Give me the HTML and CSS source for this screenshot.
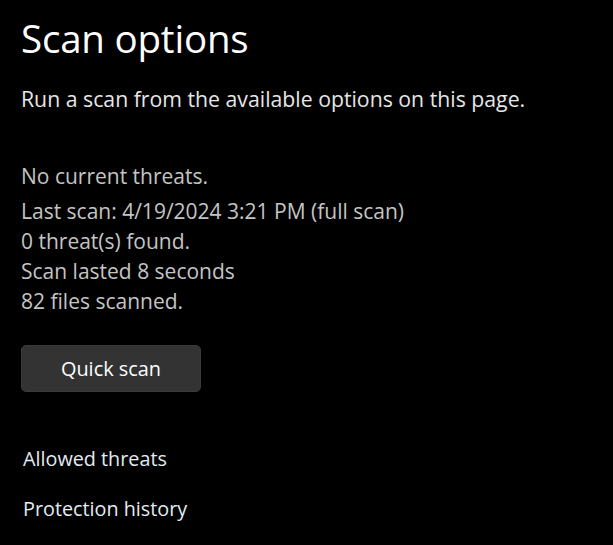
FILE: index.html
```html
<!DOCTYPE html>
<html lang="en">
<head>
<meta charset="utf-8">
<link rel="stylesheet" href="styles.css">
</head>
<body>
<main class="page">
  <h1 class="title">Scan options</h1>
  <p class="subtitle">Run a scan from the available options on this page.</p>
  <p class="status">No current threats.</p>
  <div class="details">
    <div>Last scan: 4/19/2024 3:21 PM (full scan)</div>
    <div>0 threat(s) found.</div>
    <div>Scan lasted 8 seconds</div>
    <div>82 files scanned.</div>
  </div>
  <button class="btn">Quick scan</button>
  <nav class="links">
    <a class="link">Allowed threats</a>
    <a class="link">Protection history</a>
  </nav>
</main>
</body>
</html>
```

FILE: styles.css
```css
html, body {
  margin: 0;
  padding: 0;
  background: #000;
}
.page {
  font-family: "Open Sans", "Noto Sans", sans-serif;
  padding: 12px 0 0 21px;
  display: flex;
  flex-direction: column;
  align-items: flex-start;
}
.title {
  margin: 0;
  font-weight: 400;
  font-size: 38.5px;
  line-height: 52px;
  color: #ffffff;
  letter-spacing: -0.2px;
}
.subtitle {
  margin: 21px 0 0 0;
  font-size: 21.25px;
  line-height: 28px;
  color: #e6e6e6;
}
.status {
  margin: 49px 0 0 0;
  font-size: 21px;
  line-height: 28px;
  color: #c4c4c4;
}
.details {
  margin-top: 6px;
  font-size: 21px;
  line-height: 30px;
  color: #c4c4c4;
}
.btn {
  margin-top: 29px;
  width: 180px;
  height: 47px;
  background: #333333;
  border: 1px solid #3a3a3a;
  border-radius: 5px;
  color: #ffffff;
  font-family: inherit;
  font-size: 19.9px;
  padding: 0;
}
.links {
  margin-top: 53px;
  display: flex;
  flex-direction: column;
  gap: 22px;
}
.link {
  font-size: 19.8px;
  line-height: 28px;
  color: #e2ecf2;
  padding-left: 2px;
}
```
